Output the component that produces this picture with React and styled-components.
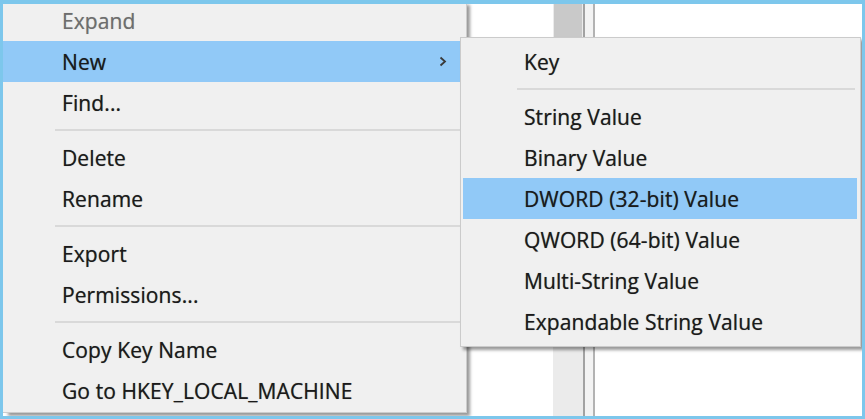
import styled, { createGlobalStyle } from "styled-components";

const GlobalStyle = createGlobalStyle`
    * { box-sizing: border-box; }
    body {
        margin: 0;
        background: #ffffff;
        font-family: "Segoe UI", "Open Sans", "Noto Sans", sans-serif;
    }
`;

const mainItems = [
    { label: "Expand", disabled: true },
    { label: "New", active: true, submenu: true },
    { label: "Find..." },
    "sep",
    { label: "Delete" },
    { label: "Rename" },
    "sep",
    { label: "Export" },
    { label: "Permissions..." },
    "sep",
    { label: "Copy Key Name" },
    { label: "Go to HKEY_LOCAL_MACHINE" },
];

const newItems = [
    { label: "Key" },
    "sep",
    { label: "String Value" },
    { label: "Binary Value" },
    { label: "DWORD (32-bit) Value", active: true },
    { label: "QWORD (64-bit) Value" },
    { label: "Multi-String Value" },
    { label: "Expandable String Value" },
];

function Chevron() {
    return (
        <svg width="8" height="11" viewBox="0 0 8 11">
            <polyline points="1.5,1.5 6,5.5 1.5,9.5" fill="none" stroke="#3a3a3a" strokeWidth="1.8" />
        </svg>
    );
}

export default function App() {
    return (
        <>
            <GlobalStyle />
            <Screen>
                {/* the registry editor window behind the popup */}
                <TreePane />
                <ScrollTrack>
                    <ScrollThumb />
                </ScrollTrack>
                <Splitter />
                <ValuesPane />

                <MainMenu>
                    {mainItems.map((item, i) =>
                        item === "sep" ? (
                            <MainSeparator key={i} />
                        ) : (
                            <MainItem key={i} $active={item.active} $disabled={item.disabled}>
                                <span>{item.label}</span>
                                {item.submenu && <Chevron />}
                            </MainItem>
                        )
                    )}
                </MainMenu>

                <SubMenu>
                    {newItems.map((item, i) =>
                        item === "sep" ? (
                            <SubSeparator key={i} />
                        ) : (
                            <SubItem key={i} $active={item.active}>
                                {item.label}
                            </SubItem>
                        )
                    )}
                </SubMenu>
            </Screen>
        </>
    );
}

const Screen = styled.div`
    position: relative;
    width: 865px;
    height: 419px;
    display: flex;
    overflow: hidden;
    background: #ffffff;
    border: 3px solid #7dc7ec;
    border-top-width: 4px;
`;

const TreePane = styled.div`
    flex: 0 0 550px;
    background: #ffffff;
`;

const ScrollTrack = styled.div`
    flex: 0 0 30px;
    background: #ebebeb;
`;

const ScrollThumb = styled.div`
    height: 150px;
    margin: 0 1px;
    background: #c9c9c9;
`;

const Splitter = styled.div`
    flex: 0 0 12px;
    background: #f3f3f3;
    border-left: 2px solid #a2a2a2;
    border-right: 2px solid #b3b3b3;
`;

const ValuesPane = styled.div`
    flex: 1;
    background: #ffffff;
`;

const MainMenu = styled.div`
    position: absolute;
    left: 0;
    top: -4px;
    width: 464px;
    padding-bottom: 1px;
    background: #f0f0f0;
    border-right: 1px solid #cccccc;
    border-bottom: 1px solid #cccccc;
    box-shadow: 4px 4px 3px -1px rgba(0, 0, 0, 0.4);
`;

const MainItem = styled.div`
    height: 41px;
    display: flex;
    align-items: center;
    justify-content: space-between;
    padding: 0 19px 0 59px;
    font-size: 21px;
    letter-spacing: 0.1px;
    color: ${(p) => (p.$disabled ? "#6d6d6d" : "#1a1a1a")};
    text-shadow: 0 0 0.7px ${(p) => (p.$disabled ? "rgba(90,90,90,0.5)" : "rgba(0,0,0,0.55)")};
    background: ${(p) => (p.$active ? "#91c9f7" : "transparent")};
    white-space: nowrap;
`;

const MainSeparator = styled.div`
    height: 2px;
    margin: 6px 0 6px 52px;
    background: #d9d9d9;
`;

const SubMenu = styled.div`
    position: absolute;
    left: 457px;
    top: 33px;
    width: 401px;
    padding: 3px 3px 4px 2px;
    background: #f0f0f0;
    border: 1px solid #cbcbcb;
    box-shadow: 3px 3px 3px rgba(0, 0, 0, 0.4);
`;

const SubItem = styled.div`
    height: 41px;
    display: flex;
    align-items: center;
    padding-left: 61px;
    font-size: 21px;
    letter-spacing: 0.1px;
    color: #1a1a1a;
    text-shadow: 0 0 0.7px rgba(0, 0, 0, 0.55);
    background: ${(p) => (p.$active ? "#91c9f7" : "transparent")};
    white-space: nowrap;
`;

const SubSeparator = styled.div`
    height: 2px;
    margin: 6px 2px 6px 54px;
    background: #d9d9d9;
`;
